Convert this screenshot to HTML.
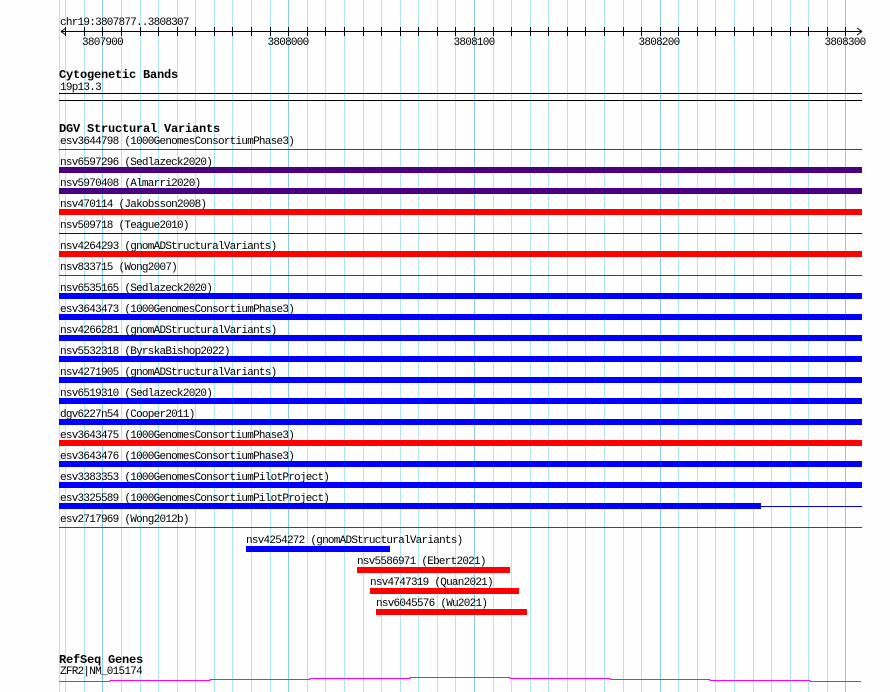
<!DOCTYPE html>
<html><head><meta charset="utf-8"><style>
html,body{margin:0;padding:0;background:#fdfefd;}
svg{display:block}
text{font-family:"Liberation Mono","DejaVu Sans Mono",monospace;font-size:11px;letter-spacing:-0.75px;fill:#000}
.h{font-weight:bold;font-size:12px;letter-spacing:-0.2px}
</style></head><body>
<svg width="890" height="692" xmlns="http://www.w3.org/2000/svg">
<rect width="890" height="692" fill="#fdfefd"/>
<path stroke="#aee8ee" stroke-width="1" fill="none" d="M59.5 0V692 M65.5 0V692 M84.5 0V692 M121.5 0V692 M140.5 0V692 M158.5 0V692 M177.5 0V692 M195.5 0V692 M214.5 0V692 M232.5 0V692 M251.5 0V692 M270.5 0V692 M307.5 0V692 M325.5 0V692 M344.5 0V692 M363.5 0V692 M381.5 0V692 M400.5 0V692 M418.5 0V692 M437.5 0V692 M455.5 0V692 M493.5 0V692 M511.5 0V692 M530.5 0V692 M548.5 0V692 M567.5 0V692 M585.5 0V692 M604.5 0V692 M623.5 0V692 M641.5 0V692 M678.5 0V692 M697.5 0V692 M715.5 0V692 M734.5 0V692 M753.5 0V692 M771.5 0V692 M790.5 0V692 M808.5 0V692 M827.5 0V692"/>
<path stroke="#8ccbe6" stroke-width="1" fill="none" d="M102.5 0V692 M288.5 0V692 M474.5 0V692 M660.5 0V692 M845.5 0V692"/>
<path stroke="#000" stroke-width="1" fill="none" d="M65.5 27V36 M84.5 27V36 M102.5 27V36 M121.5 27V36 M140.5 27V36 M158.5 27V36 M177.5 27V36 M195.5 27V36 M214.5 27V36 M232.5 27V36 M251.5 27V36 M270.5 27V36 M288.5 27V36 M307.5 27V36 M325.5 27V36 M344.5 27V36 M363.5 27V36 M381.5 27V36 M400.5 27V36 M418.5 27V36 M437.5 27V36 M455.5 27V36 M474.5 27V36 M493.5 27V36 M511.5 27V36 M530.5 27V36 M548.5 27V36 M567.5 27V36 M585.5 27V36 M604.5 27V36 M623.5 27V36 M641.5 27V36 M660.5 27V36 M678.5 27V36 M697.5 27V36 M715.5 27V36 M734.5 27V36 M753.5 27V36 M771.5 27V36 M790.5 27V36 M808.5 27V36 M827.5 27V36 M845.5 27V36"/>

<text x="60" y="25">chr19:3807877..3808307</text>
<line x1="61" y1="31.5" x2="862" y2="31.5" stroke="#000"/>
<path d="M61 31.5 L66 28 M61 31.5 L66 35 M862 31.5 L857 28 M862 31.5 L857 35" stroke="#000" fill="none"/>
<text x="102.5" y="45" text-anchor="middle">3807900</text>
<text x="288" y="45" text-anchor="middle">3808000</text>
<text x="474" y="45" text-anchor="middle">3808100</text>
<text x="659" y="45" text-anchor="middle">3808200</text>
<text x="845" y="45" text-anchor="middle">3808300</text>

<text class="h" x="59" y="78">Cytogenetic Bands</text>
<text x="60" y="90">19p13.3</text>
<rect x="59" y="93" width="803" height="1" fill="#000"/>
<rect x="59" y="100" width="803" height="1" fill="#000"/>

<text class="h" x="59" y="132">DGV Structural Variants</text>

<text x="60" y="144">esv3644798 (1000GenomesConsortiumPhase3)</text>
<rect x="59" y="149" width="803" height="1" fill="#e00"/>
<text x="60" y="165">nsv6597296 (Sedlazeck2020)</text>
<rect x="59" y="167" width="803" height="6" fill="#4b0082"/>
<text x="60" y="186">nsv5970408 (Almarri2020)</text>
<rect x="59" y="188" width="803" height="6" fill="#4b0082"/>
<text x="60" y="207">nsv470114 (Jakobsson2008)</text>
<rect x="59" y="209" width="803" height="6" fill="#f00"/>
<text x="60" y="228">nsv509718 (Teague2010)</text>
<rect x="59" y="233" width="803" height="1" fill="#0000c8"/>
<text x="60" y="249">nsv4264293 (gnomADStructuralVariants)</text>
<rect x="59" y="251" width="803" height="6" fill="#f00"/>
<text x="60" y="270">nsv833715 (Wong2007)</text>
<rect x="59" y="275" width="803" height="1" fill="#e00"/>
<text x="60" y="291">nsv6535165 (Sedlazeck2020)</text>
<rect x="59" y="293" width="803" height="6" fill="#00f"/>
<text x="60" y="312">esv3643473 (1000GenomesConsortiumPhase3)</text>
<rect x="59" y="314" width="803" height="6" fill="#00f"/>
<text x="60" y="333">nsv4266281 (gnomADStructuralVariants)</text>
<rect x="59" y="335" width="803" height="6" fill="#00f"/>
<text x="60" y="354">nsv5532318 (ByrskaBishop2022)</text>
<rect x="59" y="356" width="803" height="6" fill="#00f"/>
<text x="60" y="375">nsv4271905 (gnomADStructuralVariants)</text>
<rect x="59" y="377" width="803" height="6" fill="#00f"/>
<text x="60" y="396">nsv6519310 (Sedlazeck2020)</text>
<rect x="59" y="398" width="803" height="6" fill="#00f"/>
<text x="60" y="417">dgv6227n54 (Cooper2011)</text>
<rect x="59" y="419" width="803" height="6" fill="#00f"/>
<text x="60" y="438">esv3643475 (1000GenomesConsortiumPhase3)</text>
<rect x="59" y="440" width="803" height="6" fill="#f00"/>
<text x="60" y="459">esv3643476 (1000GenomesConsortiumPhase3)</text>
<rect x="59" y="461" width="803" height="6" fill="#00f"/>
<text x="60" y="480">esv3383353 (1000GenomesConsortiumPilotProject)</text>
<rect x="59" y="482" width="803" height="6" fill="#00f"/>
<text x="60" y="501">esv3325589 (1000GenomesConsortiumPilotProject)</text>
<rect x="59" y="503" width="702" height="6" fill="#00f"/>
<rect x="761" y="506" width="101" height="1" fill="#00f"/>
<text x="60" y="522">esv2717969 (Wong2012b)</text>
<rect x="59" y="527" width="803" height="1" fill="#e00"/>

<text x="246" y="543">nsv4254272 (gnomADStructuralVariants)</text>
<rect x="246" y="546" width="144" height="6" fill="#00f"/>
<text x="357" y="564">nsv5586971 (Ebert2021)</text>
<rect x="357" y="567" width="153" height="6" fill="#f00"/>
<text x="370" y="585">nsv4747319 (Quan2021)</text>
<rect x="370" y="588" width="149" height="6" fill="#f00"/>
<text x="376" y="606">nsv6045576 (Wu2021)</text>
<rect x="376" y="609" width="151" height="6" fill="#f00"/>

<text class="h" x="59" y="663">RefSeq Genes</text>
<text x="60" y="674">ZFR2|NM_015174</text>
<path d="M59 681.5 H110 V680.5 H210 V679.5 H310 V678.5 H410 V677.5 H510 V678.5 H610 V679.5 H710 V680.5 H810 V681.5 H861" stroke="#f0f" fill="none"/>
</svg>
</body></html>
